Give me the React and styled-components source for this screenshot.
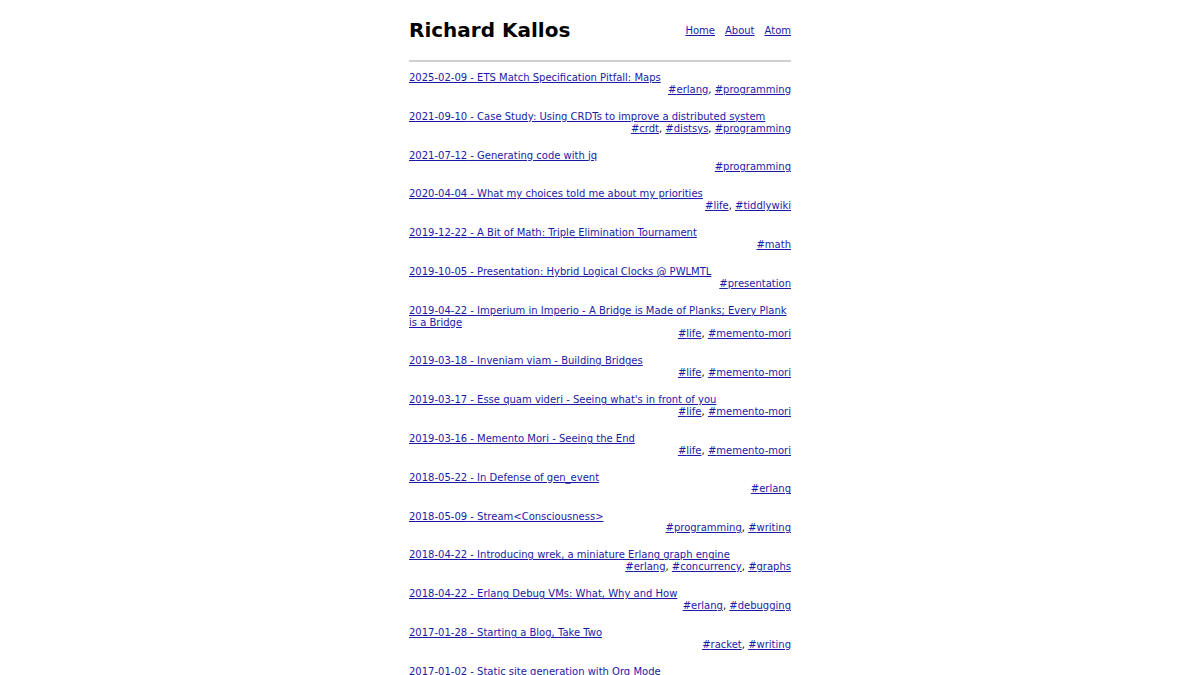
import React from "react";
import styled, { createGlobalStyle } from "styled-components";

const GlobalStyle = createGlobalStyle`
  body {
    margin: 0;
    background: #fff;
    font-family: "DejaVu Sans", sans-serif;
    color: #000;
  }
`;

const posts = [
  { date: "2025-02-09", title: "ETS Match Specification Pitfall: Maps", tags: ["erlang", "programming"] },
  { date: "2021-09-10", title: "Case Study: Using CRDTs to improve a distributed system", tags: ["crdt", "distsys", "programming"] },
  { date: "2021-07-12", title: "Generating code with jq", tags: ["programming"] },
  { date: "2020-04-04", title: "What my choices told me about my priorities", tags: ["life", "tiddlywiki"] },
  { date: "2019-12-22", title: "A Bit of Math: Triple Elimination Tournament", tags: ["math"] },
  { date: "2019-10-05", title: "Presentation: Hybrid Logical Clocks @ PWLMTL", tags: ["presentation"] },
  { date: "2019-04-22", title: "Imperium in Imperio - A Bridge is Made of Planks; Every Plank is a Bridge", tags: ["life", "memento-mori"] },
  { date: "2019-03-18", title: "Inveniam viam - Building Bridges", tags: ["life", "memento-mori"] },
  { date: "2019-03-17", title: "Esse quam videri - Seeing what's in front of you", tags: ["life", "memento-mori"] },
  { date: "2019-03-16", title: "Memento Mori - Seeing the End", tags: ["life", "memento-mori"] },
  { date: "2018-05-22", title: "In Defense of gen_event", tags: ["erlang"] },
  { date: "2018-05-09", title: "Stream<Consciousness>", tags: ["programming", "writing"] },
  { date: "2018-04-22", title: "Introducing wrek, a miniature Erlang graph engine", tags: ["erlang", "concurrency", "graphs"] },
  { date: "2018-04-22", title: "Erlang Debug VMs: What, Why and How", tags: ["erlang", "debugging"] },
  { date: "2017-01-28", title: "Starting a Blog, Take Two", tags: ["racket", "writing"] },
  { date: "2017-01-02", title: "Static site generation with Org Mode", tags: [] },
];

const App = () => {
  return (
    <>
      <GlobalStyle />
      <Page>
        <Header>
          <SiteTitle>Richard Kallos</SiteTitle>
          <Nav>
            <Link href="#">Home</Link>
            <Link href="#">About</Link>
            <Link href="#">Atom</Link>
          </Nav>
        </Header>
        <Rule />
        <PostList>
          {posts.map((p, i) => (
            <Post key={i}>
              <Link href="#">{p.date} - {p.title}</Link>
              {p.tags.length > 0 && (
                <Tags>
                  {p.tags.map((t, j) => (
                    <React.Fragment key={t}>
                      {j > 0 && ", "}
                      <Link href="#">#{t}</Link>
                    </React.Fragment>
                  ))}
                </Tags>
              )}
            </Post>
          ))}
        </PostList>
      </Page>
    </>
  );
};

const Page = styled.div`
  width: 382px;
  margin: 0 auto;
  font-size: 10px;
  line-height: 11.75px;
`;

const Header = styled.header`
  display: flex;
  justify-content: space-between;
  align-items: center;
  padding-top: 17px;
  padding-bottom: 17px;
`;

const SiteTitle = styled.h1`
  margin: 0;
  font-size: 20px;
  line-height: 26px;
  font-weight: bold;
`;

const Nav = styled.nav`
  display: flex;
  gap: 10px;
  padding-top: 1px;
`;

const Link = styled.a`
  color: #1a1aa6;
  text-decoration: underline;
`;

const Rule = styled.hr`
  margin: 0 0 10px;
  border: none;
  border-top: 2px solid #cfcfcf;
`;

const PostList = styled.div`
  display: flex;
  flex-direction: column;
  gap: 15.3px;
`;

const Post = styled.div`
  display: flex;
  flex-direction: column;
`;

const Tags = styled.div`
  text-align: right;
`;

export default App;
